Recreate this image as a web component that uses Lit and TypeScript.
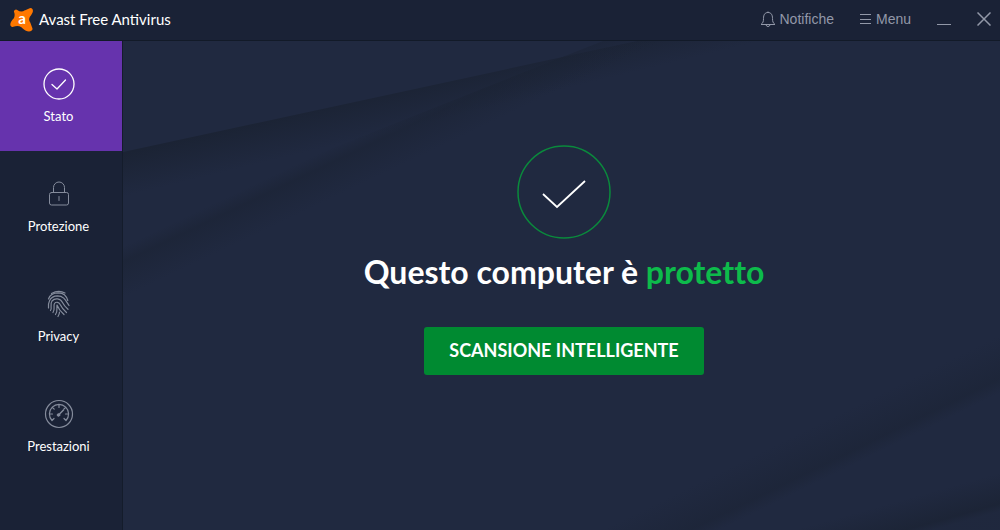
import { LitElement, html, css, svg } from "lit";
import { customElement, property, state } from "lit/decorators.js";
import { classMap } from "lit/directives/class-map.js";

type Section = "status" | "protection" | "privacy" | "performance";

const sectionIcons = {
  status: svg`
    <circle cx="16" cy="16" r="15" stroke-width="1.3"/>
    <path d="M9 16.5l5 4.500 8.500-9" stroke-width="1.3"/>`,
  protection: svg`
    <rect x="6.500" y="14.500" width="19" height="12.500" rx="2"/>
    <path d="M10.500 14.500V9.500a5.500 5.500 0 0 1 11 0v5M16 18.500v4"/>`,
  privacy: svg`
    <g stroke-width="1.200">
      <path d="M8.500 5.500Q15.500 1.500 22 5"/>
      <path d="M5.500 11C7 6 11.500 4.900 15.500 4.900 20 5 23.500 8 24.800 12.500"/>
      <path d="M5.500 20C5 16 6 8 14.500 7.800 21 7.800 23 13 26 17.500"/>
      <path d="M7.500 22.500c2-3-1-6 1.500-9.500 3-3.500 8.500-2.500 10.500 1.500 1.500 3 3.500 5 5.500 6.800"/>
      <path d="M10 24.500c2.500-3.500 0-6.500 1.500-9 1.500-2 4.500-1.500 5.500.8 1.500 3.200 4 6 6.500 8.200"/>
      <path d="M12.500 26.500c2.500-3.500 1-6 1.500-9.500 1.500 4 4 7 7 9.500"/>
      <path d="M15 28.500c1-1.500 1.500-3 1.500-4.500"/>
    </g>`,
  performance: svg`
    <circle cx="16" cy="16" r="13.500" stroke-width="1.200"/>
    <path d="M9 22.500a9.600 9.600 0 1 1 14 0M16 6.500v3M9.300 9.300l1.900 1.900M6.500 16h3M22.500 16h3M9 22.500l2-2M23 22.500l-2-2M22.700 9.300l-1.900 1.900" stroke-width="1.200"/>
    <path d="M15.500 17l5-5" stroke-width="1.500"/>
    <circle cx="15.500" cy="17" r="1.300" fill="currentColor"/>`,
};

const sections: { id: Section; label: string }[] = [
  { id: "status", label: "Stato" },
  { id: "protection", label: "Protezione" },
  { id: "privacy", label: "Privacy" },
  { id: "performance", label: "Prestazioni" },
];

@customElement("av-titlebar")
export class AvTitlebar extends LitElement {
  static styles = css`
    :host {
      display: flex;
      align-items: center;
      justify-content: space-between;
      height: 40px;
      padding: 0 9px 2px 8px;
      border-bottom: 1px solid #121a28;
      background: #1a2236;
      box-sizing: border-box;
      min-height: 41px;
    }
    .brand {
      display: flex;
      align-items: center;
      gap: 4px;
      margin: 0;
      color: #fff;
      font-size: 15px;
      font-weight: 400;
      line-height: 20px;
    }
    .actions {
      display: flex;
      align-items: center;
      gap: 26px;
    }
    button {
      display: flex;
      align-items: center;
      gap: 4px;
      padding: 0;
      border: 0;
      background: none;
      color: #9298a8;
      font-family: "Liberation Sans", Arial, sans-serif;
      font-size: 14px;
      line-height: 20px;
      cursor: pointer;
    }
    button:hover {
      color: #fff;
    }
    svg {
      display: block;
      fill: none;
      stroke: currentColor;
    }
    .logo {
      stroke: none;
      font: 700 15px "Lato", sans-serif;
    }
  `;

  render() {
    return html`
      <h1 class="brand">
        <svg class="logo" width="27" height="27" viewBox="0 0 27 27" aria-hidden="true">
          <path
            fill="#ff7800"
            stroke="#ff7800"
            stroke-width="4"
            stroke-linejoin="round"
            d="M8 5.500Q13 9.500 18 6L22.500 4Q24 5 20 10 18 14 20.500 17.500L22.500 23Q20 25 14.500 19.500 10 16.500 4.500 19 3.500 17.500 7.500 13.500 9.500 9.500 8 5.500z"
          />
          <text x="14" y="18" text-anchor="middle" fill="#fff">a</text>
        </svg>
        Avast Free Antivirus
      </h1>
      <div class="actions">
        <button type="button">
          <svg width="16" height="18" viewBox="0 0 16 18" aria-hidden="true">
            <path d="M1 14.500c2-1.500 2.500-3 2.500-6 0-4 1.500-6 4.500-6s4.500 2 4.500 6c0 3 .5 4.500 2.500 6zM6 15c.5 2 3.500 2 4 0M7.500 2h1"/>
          </svg>
          Notifiche
        </button>
        <button type="button">
          <svg width="12" height="12" viewBox="0 0 12 12" aria-hidden="true">
            <path d="M0 1.500h11M0 6.500h11M0 10.500h11"/>
          </svg>
          Menu
        </button>
        <button type="button" aria-label="Riduci a icona">
          <svg width="14" height="14" viewBox="0 0 14 14" aria-hidden="true"><path d="M0 12.500h14"/></svg>
        </button>
        <button type="button" aria-label="Chiudi">
          <svg width="14" height="14" viewBox="0 0 14 14" aria-hidden="true">
            <path stroke-width="1.500" d="M.5.5l13 13M13.500.5l-13 13"/>
          </svg>
        </button>
      </div>
    `;
  }
}

@customElement("av-sidebar")
export class AvSidebar extends LitElement {
  @property() current: Section = "status";

  static styles = css`
    :host {
      display: block;
      border-right: 1px solid #141c2b;
      background: #1a2236;
    }
    nav {
      display: flex;
      flex-direction: column;
    }
    .item {
      display: flex;
      flex-direction: column;
      align-items: center;
      gap: 6px;
      height: 110px;
      padding: 27px 5px 0 0;
      border: 0;
      background: none;
      color: #fff;
      font: inherit;
      font-size: 13px;
      line-height: 20px;
      box-sizing: border-box;
      cursor: pointer;
    }
    .active {
      background: #6633ad;
    }
    svg {
      display: block;
      fill: none;
      stroke: currentColor;
      stroke-linecap: round;
      stroke-linejoin: round;
      color: #858c9c;
    }
    .active svg {
      color: #fff;
    }
  `;

  private choose(id: Section) {
    this.dispatchEvent(new CustomEvent("choose", { detail: id }));
  }

  render() {
    return html`
      <nav>
        ${sections.map(
          ({ id, label }) => html`
            <button
              type="button"
              class=${classMap({ item: true, active: id === this.current })}
              aria-current=${id === this.current ? "page" : "false"}
              @click=${() => this.choose(id)}
            >
              <svg width="32" height="32" viewBox="0 0 32 32" aria-hidden="true">${sectionIcons[id]}</svg>
              ${label}
            </button>
          `
        )}
      </nav>
    `;
  }
}

@customElement("av-status")
export class AvStatus extends LitElement {
  static styles = css`
    :host {
      display: grid;
      grid-template: minmax(0, 1fr) / minmax(0, 1fr);
      background: #202940;
      overflow: hidden;
    }
    .folds,
    .content {
      grid-area: 1 / 1;
    }
    .folds {
      display: block;
      width: 100%;
      height: 100%;
    }
    .content {
      display: flex;
      flex-direction: column;
      align-items: center;
      padding: 104px 0 0 5px;
      z-index: 1;
    }
    h2 {
      margin: 13px 0 0;
      color: #fff;
      font-size: 32px;
      font-weight: 700;
      font-variant-ligatures: none;
      line-height: 40px;
    }
    .state {
      color: #0dbb4b;
    }
    .scan {
      min-width: 280px;
      height: 48px;
      margin-top: 35px;
      padding: 0 24px 2px;
      border: 0;
      border-radius: 3px;
      background: #008a31;
      color: #fff;
      font: inherit;
      font-size: 18px;
      font-weight: 700;
      line-height: 24px;
      cursor: pointer;
    }
    .scan:hover {
      background: #009c38;
    }
  `;

  render() {
    return html`
      <svg class="folds" viewBox="0 0 877 489" preserveAspectRatio="none" aria-hidden="true">
        <defs>
          <linearGradient id="upper" gradientUnits="userSpaceOnUse" x1="240" y1="54" x2="250" y2="95">
            <stop offset="0" stop-color="#1b2334"/>
            <stop offset="0.300" stop-color="#1b2334" stop-opacity="0.700"/>
            <stop offset="1" stop-color="#1b2334" stop-opacity="0"/>
          </linearGradient>
          <linearGradient id="middle" gradientUnits="userSpaceOnUse" x1="205" y1="108" x2="225" y2="150">
            <stop offset="0" stop-color="#1b2334" stop-opacity="0"/>
            <stop offset="0.300" stop-color="#1b2334" stop-opacity="0.600"/>
            <stop offset="1" stop-color="#1b2334" stop-opacity="0"/>
          </linearGradient>
          <linearGradient id="lower" gradientUnits="userSpaceOnUse" x1="711" y1="375" x2="734" y2="422">
            <stop offset="0" stop-color="#1b2334" stop-opacity="0"/>
            <stop offset="0.750" stop-color="#1b2334" stop-opacity="0.550"/>
            <stop offset="1" stop-color="#1b2334" stop-opacity="0"/>
          </linearGradient>
          <linearGradient id="corner" gradientUnits="userSpaceOnUse" x1="800" y1="453" x2="810" y2="489">
            <stop offset="0" stop-color="#1b2334" stop-opacity="0"/>
            <stop offset="0.800" stop-color="#1b2334" stop-opacity="0.800"/>
            <stop offset="1" stop-color="#1b2334" stop-opacity="0.200"/>
          </linearGradient>
        </defs>
        <path fill="url(#upper)" d="M0 111L514 0h363v489H0z"/>
        <path fill="url(#middle)" d="M0 190L480 0h397v489H0z"/>
        <path fill="url(#lower)" d="M450 489L877 280v209z"/>
        <path fill="url(#corner)" d="M650 489l227-60v60z"/>
      </svg>
      <div class="content">
        <svg width="94" height="94" viewBox="0 0 94 94" fill="none" aria-hidden="true">
          <circle cx="47" cy="47" r="46" stroke="#0a8a3c" stroke-width="1.500"/>
          <path d="M26 49l14 13 28-26" stroke="#fff" stroke-width="1.800"/>
        </svg>
        <h2>Questo computer è <span class="state">protetto</span></h2>
        <button type="button" class="scan">SCANSIONE INTELLIGENTE</button>
      </div>
    `;
  }
}

@customElement("app-root")
export class AppRoot extends LitElement {
  @state() private section: Section = "status";

  static styles = css`
    :host {
      display: grid;
      grid-template: auto minmax(0, 1fr) / 123px minmax(0, 1fr);
      height: 100vh;
      background: #1a2236;
      font-family: "Lato", "Liberation Sans", sans-serif;
    }
    .titlebar {
      grid-column: 1 / -1;
    }
  `;

  render() {
    return html`
      <av-titlebar class="titlebar"></av-titlebar>
      <av-sidebar
        .current=${this.section}
        @choose=${(e: CustomEvent<Section>) => (this.section = e.detail)}
      ></av-sidebar>
      <av-status></av-status>
    `;
  }
}
